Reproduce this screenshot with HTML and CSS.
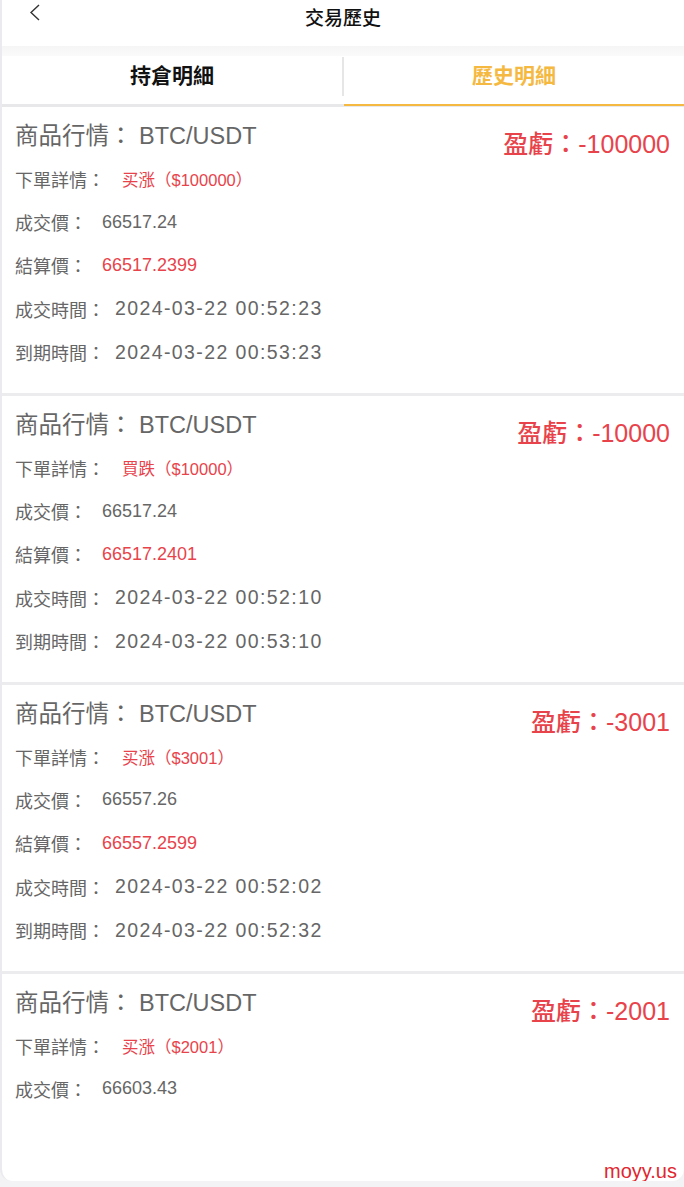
FILE: index.html
```html
<!DOCTYPE html>
<html lang="zh-Hant">
<head>
    <meta charset="UTF-8"/>
    <meta name="viewport" content="width=device-width, initial-scale=1.0"/>
    <title>交易歷史</title>
    <link rel="stylesheet" href="styles.css">
</head>
<body>
<div class="page">
    <div class="header">
        <span class="back">
            <svg width="12" height="17" viewBox="0 0 12 17"><polyline points="10,1 2,8.5 10,16" fill="none" stroke="#333" stroke-width="1.4"/></svg>
        </span>
        <h1 class="title">交易歷史</h1>
        <span></span>
    </div>
    <div class="band"></div>
    <div class="tabs">
        <div class="tab">持倉明細</div>
        <div class="tab-sep"></div>
        <div class="tab active">歷史明細</div>
    </div>

    <div class="card">
        <div class="card-head">
            <p class="pair"><span class="label">商品行情：</span> BTC/USDT</p>
            <p class="profit">盈虧：-100000</p>
        </div>
        <p class="row"><span class="label">下單詳情：</span><span class="order red">买涨（$100000）</span></p>
        <p class="row"><span class="label">成交價：</span><span class="val">66517.24</span></p>
        <p class="row"><span class="label">結算價：</span><span class="val red">66517.2399</span></p>
        <p class="row"><span class="label">成交時間：</span><span class="time">2024-03-22 00:52:23</span></p>
        <p class="row"><span class="label">到期時間：</span><span class="time">2024-03-22 00:53:23</span></p>
    </div>

    <div class="card">
        <div class="card-head">
            <p class="pair"><span class="label">商品行情：</span> BTC/USDT</p>
            <p class="profit">盈虧：-10000</p>
        </div>
        <p class="row"><span class="label">下單詳情：</span><span class="order red">買跌（$10000）</span></p>
        <p class="row"><span class="label">成交價：</span><span class="val">66517.24</span></p>
        <p class="row"><span class="label">結算價：</span><span class="val red">66517.2401</span></p>
        <p class="row"><span class="label">成交時間：</span><span class="time">2024-03-22 00:52:10</span></p>
        <p class="row"><span class="label">到期時間：</span><span class="time">2024-03-22 00:53:10</span></p>
    </div>

    <div class="card">
        <div class="card-head">
            <p class="pair"><span class="label">商品行情：</span> BTC/USDT</p>
            <p class="profit">盈虧：-3001</p>
        </div>
        <p class="row"><span class="label">下單詳情：</span><span class="order red">买涨（$3001）</span></p>
        <p class="row"><span class="label">成交價：</span><span class="val">66557.26</span></p>
        <p class="row"><span class="label">結算價：</span><span class="val red">66557.2599</span></p>
        <p class="row"><span class="label">成交時間：</span><span class="time">2024-03-22 00:52:02</span></p>
        <p class="row"><span class="label">到期時間：</span><span class="time">2024-03-22 00:52:32</span></p>
    </div>

    <div class="card">
        <div class="card-head">
            <p class="pair"><span class="label">商品行情：</span> BTC/USDT</p>
            <p class="profit">盈虧：-2001</p>
        </div>
        <p class="row"><span class="label">下單詳情：</span><span class="order red">买涨（$2001）</span></p>
        <p class="row"><span class="label">成交價：</span><span class="val">66603.43</span></p>
    </div>

    <span class="mark">moyy.us</span>
</div>
</body>
</html>
```

FILE: styles.css
```css
* {
    margin: 0;
    padding: 0;
    box-sizing: border-box;
}

body {
    width: 684px;
    height: 1187px;
    overflow: hidden;
    background-color: #f3f3f5;
    font-family: 'Liberation Sans', 'Noto Sans CJK SC', sans-serif;
    color: #666;
}

.page {
    position: relative;
    height: 1181px;
    overflow: hidden;
    background-color: #fff;
    border-left: 2px solid #ebebef;
    border-radius: 0 0 12px 12px;
}

.header {
    height: 46px;
    display: grid;
    grid-template-columns: 1fr auto 1fr;
}

.back {
    padding: 4px 0 0 27px;
}

.title {
    font-size: 19px;
    font-weight: 500;
    line-height: 38px;
    color: #111;
}

.band {
    height: 10px;
    background: linear-gradient(#f5f5f5, #fafafa);
}

.tabs {
    display: flex;
    height: 51px;
}

.tab {
    flex: 1;
    line-height: 40px;
    text-align: center;
    font-size: 21px;
    font-weight: 700;
    color: #111;
    border-bottom: 3px solid #e8e8ea;
}

.tab.active {
    color: #f5b942;
    font-weight: 600;
    border-bottom: 2px solid #f5b942;
    height: 50px;
    box-shadow: 0 1px 0 #e8e8ea;
}

.tab-sep {
    width: 2px;
    border-bottom: 3px solid #e8e8ea;
    background: linear-gradient(transparent 1px, #e6e6e6 1px, #e6e6e6 40px, transparent 40px);
}

.card {
    padding: 8px 14px 19px 13px;
}

.card + .card {
    border-top: 3px solid #ececee;
}

.card-head {
    display: flex;
    justify-content: space-between;
    align-items: flex-start;
}

.pair {
    font-size: 23.5px;
    line-height: 42px;
    color: #666;
}

.profit {
    margin: 8px 0 -8px;
    font-size: 25px;
    line-height: 42px;
    font-weight: 500;
    color: #e8434b;
}

.row {
    height: 43.4px;
    display: flex;
    align-items: center;
    font-size: 18px;
}

.label {
    color: #666;
}

.order {
    margin-left: 17px;
    font-size: 16.5px;
}

.val {
    margin-left: 15px;
}

.time {
    margin-left: 10px;
    font-size: 19.5px;
    letter-spacing: 1.4px;
}

.red {
    color: #e8434b;
}

.mark {
    position: absolute;
    right: 7px;
    bottom: -2px;
    font-size: 20px;
    line-height: 23px;
    color: #e0262e;
}
```
